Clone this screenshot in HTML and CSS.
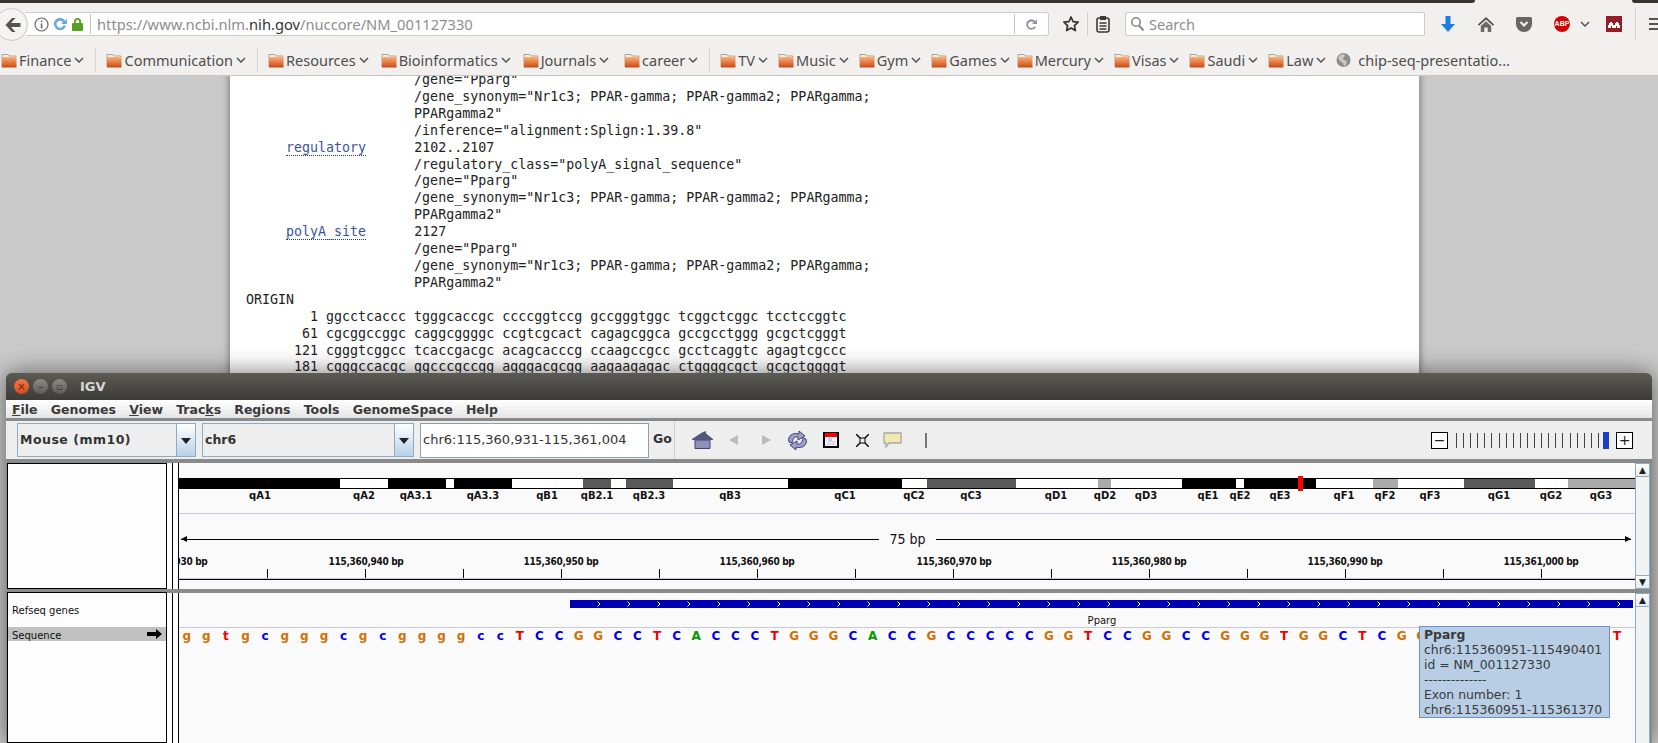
FILE: index.html
```html
<!DOCTYPE html>
<html lang="en">
<head>
    <meta charset="UTF-8">
    <title>IGV - NM_001127330</title>
    <link rel="stylesheet" href="styles.css">
</head>
<body>

<!-- Browser toolbar -->
<div class="browser">
    <div class="tab-strip"><div class="tab-dark tab-left"></div><div class="tab-dark tab-right"></div></div>
    <div class="nav-row">
        <div class="back-btn">
            <svg width="18" height="16" viewBox="0 0 18 16"><path d="M8 1 1.5 8 8 15h3.5L7 10h9.5V6H7l4.5-5z" fill="#555"/></svg>
        </div>
        <div class="url-bar">
            <svg class="url-icon" width="15" height="15" viewBox="0 0 15 15"><circle cx="7.5" cy="7.5" r="6.5" fill="none" stroke="#666" stroke-width="1.2"/><rect x="6.8" y="6.4" width="1.5" height="5" fill="#666"/><rect x="6.8" y="3.5" width="1.5" height="1.6" fill="#666"/></svg>
            <svg class="url-icon" width="16" height="16" viewBox="0 0 16 16"><path d="M13.5 5A6.2 6.2 0 1 0 14 10l-2.6-.8A3.5 3.5 0 1 1 11 6.3L9 8h6V2z" fill="#6ea6dc"/></svg>
            <svg class="url-icon" width="13" height="14" viewBox="0 0 13 14"><path d="M3 6V4.5a3.5 3.5 0 0 1 7 0V6h-1.8V4.5a1.7 1.7 0 0 0-3.4 0V6z" fill="#58a024"/><rect x="1" y="6" width="11" height="8" rx="1" fill="#58a024"/></svg>
            <span class="url-sep"></span>
            <span class="url-text">https://www.ncbi.nlm.<b>nih.gov</b>/nuccore/NM_001127330</span>
            <span class="url-sep url-sep-end"></span>
            <svg class="url-reload" width="14" height="15" viewBox="0 0 14 15"><path d="M11.4 4.2A5.2 5.2 0 1 0 12 10l-1.9-.5a3.3 3.3 0 1 1-.3-4L8 7h5V2z" fill="#8c959e"/></svg>
        </div>
        <svg class="star" width="18" height="18" viewBox="0 0 18 18"><path d="M9 2l2.1 4.6 5 .6-3.7 3.4 1 5L9 13.1 4.600 15.600l1-5L1.900 7.200l5-.6z" fill="none" stroke="#333" stroke-width="1.700" stroke-linejoin="round"/></svg>
        <span class="nav-sep"></span>
        <svg class="clipboard" width="14" height="18" viewBox="0 0 14 18"><rect x="1" y="3" width="12" height="14" rx="2" fill="none" stroke="#3a3a3a" stroke-width="1.600"/><rect x="4" y="1" width="6" height="4" fill="#3a3a3a"/><path d="M3.500 8h7M3.500 11h7M3.500 14h7" stroke="#3a3a3a" stroke-width="1.500"/></svg>
        <div class="search-box">
            <svg width="15" height="16" viewBox="0 0 15 16"><circle cx="6" cy="6" r="4.300" fill="none" stroke="#888" stroke-width="1.600"/><path d="M9 9.500l4.500 5" stroke="#888" stroke-width="2"/></svg>
            <span>Search</span>
        </div>
        <svg class="tool-download" width="16" height="18" viewBox="0 0 16 18"><path d="M5.500 1h5v8H15l-7 8-7-8h4.500z" fill="#1c7ee0"/></svg>
        <svg class="tool-home" width="18" height="17" viewBox="0 0 18 17"><path d="M9 1 0.800 8.500l1.200 1.200L9 3.500l7 6.200 1.200-1.200z" fill="#555"/><path d="M3.800 10 9 5.300l5.200 4.700V16h-3.500v-4.500H7.300V16H3.800z" fill="#6a6a6a"/></svg>
        <svg class="tool-pocket" width="16" height="15" viewBox="0 0 16 15"><path d="M1.500 0h13A1.500 1.500 0 0 1 16 1.500V7A8 8 0 0 1 0 7V1.500A1.500 1.500 0 0 1 1.500 0z" fill="#666"/><path d="M4.500 5 8 8.500 11.500 5" fill="none" stroke="#f2f0ee" stroke-width="2.200"/></svg>
        <div class="tool-abp">ABP</div>
        <svg class="tool-chevron" width="10" height="6" viewBox="0 0 10 6"><path d="M1 1l4 4 4-4" fill="none" stroke="#555" stroke-width="1.500"/></svg>
        <div class="tool-mask"><svg width="12" height="7" viewBox="0 0 12 7"><path d="M0 7V4h1V2h1V1h2v1h1v2h2V2h1V1h2v1h1v2h1v3H9V5H8v2H4V5H3v2z" fill="#fff"/></svg></div>
        <span class="tool-divider"></span>
        <div class="hamburger"><span></span><span></span><span></span></div>
    </div>

    <div class="bookmarks">
        <div class="bm"><svg class="folder"><use href="#folder-icon"/></svg><span>Finance</span><svg class="bm-chev" viewBox="0 0 10 6"><path d="M1 1l4 4 4-4"/></svg></div>
        <i class="bm-sep"></i>
        <div class="bm"><svg class="folder"><use href="#folder-icon"/></svg><span>Communication</span><svg class="bm-chev" viewBox="0 0 10 6"><path d="M1 1l4 4 4-4"/></svg></div>
        <i class="bm-sep"></i>
        <div class="bm bm-wide"><svg class="folder"><use href="#folder-icon"/></svg><span>Resources</span><svg class="bm-chev" viewBox="0 0 10 6"><path d="M1 1l4 4 4-4"/></svg></div>
        <div class="bm bm-wide"><svg class="folder"><use href="#folder-icon"/></svg><span>Bioinformatics</span><svg class="bm-chev" viewBox="0 0 10 6"><path d="M1 1l4 4 4-4"/></svg></div>
        <div class="bm bm-wider"><svg class="folder"><use href="#folder-icon"/></svg><span>Journals</span><svg class="bm-chev" viewBox="0 0 10 6"><path d="M1 1l4 4 4-4"/></svg></div>
        <div class="bm"><svg class="folder"><use href="#folder-icon"/></svg><span>career</span><svg class="bm-chev" viewBox="0 0 10 6"><path d="M1 1l4 4 4-4"/></svg></div>
        <i class="bm-sep"></i>
        <div class="bm"><svg class="folder"><use href="#folder-icon"/></svg><span>TV</span><svg class="bm-chev" viewBox="0 0 10 6"><path d="M1 1l4 4 4-4"/></svg></div>
        <div class="bm"><svg class="folder"><use href="#folder-icon"/></svg><span>Music</span><svg class="bm-chev" viewBox="0 0 10 6"><path d="M1 1l4 4 4-4"/></svg></div>
        <div class="bm"><svg class="folder"><use href="#folder-icon"/></svg><span>Gym</span><svg class="bm-chev" viewBox="0 0 10 6"><path d="M1 1l4 4 4-4"/></svg></div>
        <div class="bm bm-tight"><svg class="folder"><use href="#folder-icon"/></svg><span>Games</span><svg class="bm-chev" viewBox="0 0 10 6"><path d="M1 1l4 4 4-4"/></svg></div>
        <div class="bm"><svg class="folder"><use href="#folder-icon"/></svg><span>Mercury</span><svg class="bm-chev" viewBox="0 0 10 6"><path d="M1 1l4 4 4-4"/></svg></div>
        <div class="bm"><svg class="folder"><use href="#folder-icon"/></svg><span>Visas</span><svg class="bm-chev" viewBox="0 0 10 6"><path d="M1 1l4 4 4-4"/></svg></div>
        <div class="bm"><svg class="folder"><use href="#folder-icon"/></svg><span>Saudi</span><svg class="bm-chev" viewBox="0 0 10 6"><path d="M1 1l4 4 4-4"/></svg></div>
        <div class="bm"><svg class="folder"><use href="#folder-icon"/></svg><span>Law</span><svg class="bm-chev" viewBox="0 0 10 6"><path d="M1 1l4 4 4-4"/></svg></div>
        <div class="bm bm-link">
            <svg class="globe" width="15" height="16" viewBox="0 0 15 16"><circle cx="7.500" cy="8" r="7" fill="#8d8d8d"/><path d="M4 3l4-1 1 2-2 2 1 2 3 1-1 4-2 1-1-3-3-2-2-3z" fill="#c9c9c9"/></svg>
            <span>chip-seq-presentatio...</span>
        </div>
    </div>
</div>

<svg class="defs" width="0" height="0">
    <defs>
        <linearGradient id="folder-fill" x1="0" y1="0" x2="0" y2="1">
            <stop offset="0" stop-color="#f7b27a"/>
            <stop offset="1" stop-color="#cf4510"/>
        </linearGradient>
        <symbol id="folder-icon" viewBox="0 0 16 15">
            <path d="M1 14V1.500h6l1 1.500h7v1" fill="#f4f1ec" stroke="#a9a49c"/>
            <rect x="1" y="4" width="14.500" height="10.500" fill="url(#folder-fill)"/>
        </symbol>
    </defs>
</svg>

<!-- Page behind the IGV window -->
<div class="page">
    <div class="sheet">
<pre>                     /gene="Pparg"
                     /gene_synonym="Nr1c3; PPAR-gamma; PPAR-gamma2; PPARgamma;
                     PPARgamma2"
                     /inference="alignment:Splign:1.39.8"
     <a>regulatory</a>      2102..2107
                     /regulatory_class="polyA_signal_sequence"
                     /gene="Pparg"
                     /gene_synonym="Nr1c3; PPAR-gamma; PPAR-gamma2; PPARgamma;
                     PPARgamma2"
     <a>polyA_site</a>      2127
                     /gene="Pparg"
                     /gene_synonym="Nr1c3; PPAR-gamma; PPAR-gamma2; PPARgamma;
                     PPARgamma2"
ORIGIN
        1 ggcctcaccc tgggcaccgc ccccggtccg gccgggtggc tcggctcggc tcctccggtc
       61 cgcggccggc caggcggggc ccgtcgcact cagagcggca gccgcctggg gcgctcgggt
      121 cgggtcggcc tcaccgacgc acagcacccg ccaagccgcc gcctcaggtc agagtcgccc
      181 cgggccacgc ggcccgccgg agggacgcgg aagaagagac ctggggcgct gcgctggggt</pre>
    </div>
</div>

<!-- IGV window -->
<div class="igv">
    <div class="titlebar">
        <span class="win-btn win-close">×</span>
        <span class="win-btn">–</span>
        <span class="win-btn">▫</span>
        <span class="win-title">IGV</span>
    </div>

    <div class="menubar">
        <span><u>F</u>ile</span>
        <span>Genomes</span>
        <span><u>V</u>iew</span>
        <span>Trac<u>k</u>s</span>
        <span>Regions</span>
        <span>Tools</span>
        <span>GenomeSpace</span>
        <span>Help</span>
    </div>

    <div class="toolbar">
        <div class="combo combo-genome"><span>Mouse (mm10)</span><i class="combo-arrow"></i></div>
        <div class="combo combo-chr"><span>chr6</span><i class="combo-arrow"></i></div>
        <div class="locus">chr6:115,360,931-115,361,004</div>
        <div class="go-btn">Go</div>

        <svg class="ic ic-home" width="21" height="18" viewBox="0 0 21 18"><path d="M3 9h15v8.500H3z" fill="#8f8fb8" stroke="#44446a"/><path d="M0 8 10 1.500l4-1.500v2.500L21 8v1H0z" fill="#55557c"/></svg>
        <svg class="ic ic-left" width="9" height="10" viewBox="0 0 9 10"><path d="M9 0v10L0 5z" fill="#bbb"/></svg>
        <svg class="ic ic-right" width="9" height="10" viewBox="0 0 9 10"><path d="M0 0v10l9-5z" fill="#bbb"/></svg>
        <svg class="ic ic-refresh" width="21" height="21" viewBox="0 0 21 21"><path d="M2 12C0 6 6 2 12 4V1l6 5-7 4V7C8 6 6 8 5 13z" fill="#9d9fd3" stroke="#40406a"/><path d="M19 9c2 6-4 10-10 8v3l-6-5 7-4v3c3 1 5-1 6-6z" fill="#9d9fd3" stroke="#40406a"/></svg>
        <svg class="ic ic-bar" width="16" height="16" viewBox="0 0 16 16"><rect x="1" y="1" width="14" height="14" fill="#f4f1fa" stroke="#000" stroke-width="2"/><rect x="2" y="1" width="12" height="4" fill="#f00"/><rect x="5" y="6" width="4" height="4" fill="#c9cdee"/><rect x="9" y="9" width="3" height="4" fill="#f0cfe0"/><rect x="4" y="11" width="4" height="2" fill="#d5d8f2"/></svg>
        <svg class="ic ic-fit" width="13" height="13" viewBox="0 0 13 13"><path d="M0 0l4 4M13 0L9 4M0 13l4-4M13 13L9 9" stroke="#000" stroke-width="1.400"/><rect x="4" y="4" width="5" height="5" fill="none" stroke="#000"/></svg>
        <svg class="ic ic-note" width="19" height="16" viewBox="0 0 19 16"><path d="M1 1h17v10H6l-3 4v-4H1z" fill="#f0eab0" stroke="#a8a8a8" stroke-width="1.300"/></svg>
        <span class="ic-sep"></span>

        <div class="zoom-ctl">
            <span class="zoom-btn">−</span>
            <span class="zoom-ticks"></span>
            <span class="zoom-thumb"></span>
            <span class="zoom-btn">+</span>
        </div>
    </div>

    <!-- Header panel: ideogram and ruler -->
    <div class="panel panel-top">
        <div class="names"></div>
        <div class="gutter"></div>
        <div class="data">
            <div class="ideogram">
                <i class="b-k" style="width:161px"></i><i class="b-w" style="width:48px"></i><i class="b-k" style="width:58px"></i><i class="b-w" style="width:8px"></i><i class="b-k" style="width:58px"></i><i class="b-w" style="width:71px"></i><i class="b-d" style="width:28px"></i><i class="b-w" style="width:15px"></i><i class="b-d" style="width:47px"></i><i class="b-w" style="width:115px"></i><i class="b-k" style="width:114px"></i><i class="b-w" style="width:25px"></i><i class="b-d" style="width:89px"></i><i class="b-w" style="width:82px"></i><i class="b-l" style="width:13px"></i><i class="b-w" style="width:71px"></i><i class="b-k" style="width:54px"></i><i class="b-w" style="width:8px"></i><i class="b-k" style="width:72px"></i><i class="b-w" style="width:57px"></i><i class="b-l" style="width:25px"></i><i class="b-w" style="width:66px"></i><i class="b-d" style="width:71px"></i><i class="b-w" style="width:33px"></i><i class="b-l" style="width:67px"></i>
                <span class="locator" style="left:1119px"></span>
            </div>
            <div class="band-labels">
                <span style="left:81px">qA1</span><span style="left:185px">qA2</span><span style="left:237px">qA3.1</span><span style="left:304px">qA3.3</span><span style="left:368px">qB1</span><span style="left:418px">qB2.1</span><span style="left:470px">qB2.3</span><span style="left:551px">qB3</span><span style="left:666px">qC1</span><span style="left:735px">qC2</span><span style="left:792px">qC3</span><span style="left:877px">qD1</span><span style="left:926px">qD2</span><span style="left:967px">qD3</span><span style="left:1029px">qE1</span><span style="left:1061px">qE2</span><span style="left:1101px">qE3</span><span style="left:1165px">qF1</span><span style="left:1206px">qF2</span><span style="left:1251px">qF3</span><span style="left:1320px">qG1</span><span style="left:1372px">qG2</span><span style="left:1422px">qG3</span>
            </div>
            <div class="scale">
                <i class="scale-line scale-left"></i>
                <span>75 bp</span>
                <i class="scale-line scale-right"></i>
            </div>
            <div class="tick-labels">
                <span style="left:-9px">115,360,930 bp</span><span style="left:187px">115,360,940 bp</span><span style="left:382px">115,360,950 bp</span><span style="left:578px">115,360,960 bp</span><span style="left:775px">115,360,970 bp</span><span style="left:970px">115,360,980 bp</span><span style="left:1166px">115,360,990 bp</span><span style="left:1362px">115,361,000 bp</span>
            </div>
            <div class="ticks"></div>
        </div>
        <div class="scroller"><span class="sc-btn">▲</span><span class="sc-track"></span><span class="sc-btn">▼</span></div>
    </div>

    <!-- Tracks -->
    <div class="panel panel-bottom">
        <div class="names">
            <div class="track-name">Refseq genes</div>
            <div class="seq-name">
                <span>Sequence</span>
                <svg width="15" height="10" viewBox="0 0 15 10"><path d="M0 3h9V0l6 5-6 5V7H0z" fill="#000"/></svg>
            </div>
        </div>
        <div class="gutter"></div>
        <div class="data">
            <div class="gene-row">
                <svg class="gene-bar" width="1063" height="8">
                    <defs><pattern id="chevrons" x="1" width="30" height="8" patternUnits="userSpaceOnUse"><path d="M26.500 1.500l2.500 2.500-2.500 2.500" fill="none" stroke="#fff"/></pattern></defs>
                    <rect width="1063" height="8" fill="#0000b2"/>
                    <rect width="1063" height="8" fill="url(#chevrons)"/>
                </svg>
                <span class="gene-label">Pparg</span>
            </div>
            <div class="sequence"><i class="g">g</i><i class="g">g</i><i class="t">t</i><i class="g">g</i><i class="c">c</i><i class="g">g</i><i class="g">g</i><i class="g">g</i><i class="c">c</i><i class="g">g</i><i class="c">c</i><i class="g">g</i><i class="g">g</i><i class="g">g</i><i class="g">g</i><i class="c">c</i><i class="c">c</i><i class="t">T</i><i class="c">C</i><i class="c">C</i><i class="g">G</i><i class="g">G</i><i class="c">C</i><i class="c">C</i><i class="t">T</i><i class="c">C</i><i class="a">A</i><i class="c">C</i><i class="c">C</i><i class="c">C</i><i class="t">T</i><i class="g">G</i><i class="g">G</i><i class="g">G</i><i class="c">C</i><i class="a">A</i><i class="c">C</i><i class="c">C</i><i class="g">G</i><i class="c">C</i><i class="c">C</i><i class="c">C</i><i class="c">C</i><i class="c">C</i><i class="g">G</i><i class="g">G</i><i class="t">T</i><i class="c">C</i><i class="c">C</i><i class="g">G</i><i class="g">G</i><i class="c">C</i><i class="c">C</i><i class="g">G</i><i class="g">G</i><i class="g">G</i><i class="t">T</i><i class="g">G</i><i class="g">G</i><i class="c">C</i><i class="t">T</i><i class="c">C</i><i class="g">G</i><i class="g">G</i><i class="c">C</i><i class="t">T</i><i class="c">C</i><i class="g">G</i><i class="g">G</i><i class="c">C</i><i class="t">T</i><i class="c">C</i><i class="c">C</i><i class="t">T</i></div>
            <div class="tooltip">
                <b>Pparg</b>
                <div>chr6:115360951-115490401</div>
                <div>id = NM_001127330</div>
                <div>--------------</div>
                <div>Exon number: 1</div>
                <div>chr6:115360951-115361370</div>
            </div>
        </div>
        <div class="scroller"><span class="sc-btn">▲</span><span class="sc-track"></span></div>
    </div>
</div>

</body>
</html>
```

FILE: styles.css
```css
/* Base */
html, body {
    margin: 0;
    padding: 0;
    height: 743px;
    overflow: hidden;
}

body {
    position: relative;
    display: flex;
    flex-direction: column;
    background-color: #cacaca;
    font-family: "Noto Sans", sans-serif;
}

.defs {
    position: absolute;
}

/* Browser toolbar */
.browser {
    height: 76px;
    flex: none;
    background-color: #f2f0ee;
    border-bottom: 1px solid #c9c5c1;
    box-sizing: border-box;
    overflow: hidden;
}

.tab-strip {
    display: flex;
    height: 3px;
    justify-content: space-between;
}

.tab-dark {
    background-color: #35342f;
    height: 3px;
}

.tab-left {
    width: 1475px;
    border-bottom-right-radius: 4px;
}

.tab-right {
    width: 26px;
    border-bottom-left-radius: 4px;
}

.nav-row {
    position: relative;
    display: flex;
    align-items: center;
    height: 42px;
    padding-left: 26px;
    box-sizing: border-box;
}

.nav-row > * {
    flex: none;
}

.back-btn {
    position: absolute;
    left: -5px;
    top: 5px;
    height: 31px;
    border: 1px solid #c6c6c6;
    border-radius: 50%;
    background-color: #f5f4f2;
    display: flex;
    justify-content: flex-end;
    align-items: center;
    padding-right: 5px;
    box-sizing: content-box;
    width: 26px;
    z-index: 1;
}

.url-bar {
    display: flex;
    align-items: center;
    width: 1023px;
    height: 24px;
    background-color: #fff;
    border: 1px solid #cbcbcb;
    border-left: none;
    border-radius: 0 3px 3px 0;
    box-sizing: border-box;
    padding-left: 8px;
}

.url-icon {
    margin-right: 3px;
    flex: none;
}

.url-sep {
    width: 1px;
    height: 20px;
    background-color: #c8c8c8;
    margin: 0 6px 0 3px;
}

.url-text {
    font-size: 14.7px;
    color: #8d8d8d;
    white-space: nowrap;
}

.url-text b {
    font-weight: normal;
    color: #333;
}

.url-sep-end {
    margin: 0 0 0 auto;
}

.url-reload {
    margin: 0 10px 0 9px;
}

.star {
    margin-left: 13px;
}

.nav-sep {
    width: 1px;
    height: 24px;
    background-color: #cfcfcf;
    margin-left: 7px;
}

.clipboard {
    margin-left: 8px;
}

.search-box {
    display: flex;
    align-items: center;
    gap: 4px;
    width: 300px;
    height: 24px;
    margin-left: 15px;
    padding-left: 4px;
    background-color: #fff;
    border: 1px solid #cbcbcb;
    border-radius: 2px;
    box-sizing: border-box;
    font-size: 14.5px;
    color: #8d8d8d;
}

.tool-download { margin-left: 15px; }
.tool-home { margin-left: 21px; }
.tool-pocket { margin-left: 21px; }

.tool-abp {
    margin-left: 22px;
    width: 16px;
    height: 16px;
    border-radius: 50%;
    background-color: #d20000;
    color: #fff;
    font: bold 7px "Liberation Sans", sans-serif;
    line-height: 16px;
    text-align: center;
}

.tool-chevron { margin-left: 10px; }

.tool-mask {
    display: flex;
    justify-content: center;
    align-items: center;
    width: 16px;
    height: 16px;
    margin-left: 16px;
    background-color: #971d24;
}

.tool-divider {
    width: 1px;
    height: 34px;
    background-color: #d6d4d2;
    margin-left: 13px;
}

.hamburger {
    display: flex;
    flex-direction: column;
    gap: 3px;
    margin-left: 13px;
}

.hamburger span {
    display: block;
    width: 16px;
    height: 2px;
    background-color: #555;
}

/* Bookmarks */
.bookmarks {
    display: flex;
    align-items: center;
    height: 30px;
    padding-left: 1px;
    font-size: 14.5px;
    color: #4d4d4d;
    white-space: nowrap;
}

.bm {
    display: flex;
    align-items: center;
    margin-right: 10px;
}

.bm-wide { margin-right: 12px; }
.bm-wider { margin-right: 15px; }
.bm-tight { margin-right: 7px; }

.folder {
    width: 16px;
    height: 15px;
    margin-right: 2px;
    flex: none;
}

.bm-chev {
    width: 10px;
    height: 6px;
    margin-left: 3px;
    fill: none;
    stroke: #555;
    stroke-width: 1.5;
}

.bm-sep {
    width: 1px;
    height: 24px;
    background-color: #d8d6d4;
    margin: 0 10px 0 1px;
}

.globe {
    margin-right: 7px;
}

/* Page behind */
.page {
    flex: 1;
    overflow: hidden;
    padding-left: 230px;
}

.sheet {
    width: 1189px;
    height: 100%;
    background-color: #fff;
    box-shadow: 0 0 8px rgba(0, 0, 0, 0.5);
    padding-left: 16px;
    box-sizing: border-box;
}

.sheet pre {
    margin: -4px 0 0;
    font-family: "DejaVu Sans Mono", monospace;
    font-size: 13.3px;
    line-height: 16.9px;
    color: #222;
}

.sheet a {
    color: #3a52a0;
    border-bottom: 1px dotted #1c2fd0;
}

/* IGV window */
.igv {
    position: absolute;
    left: 6px;
    right: 6px;
    top: 373px;
    bottom: 0;
    display: flex;
    flex-direction: column;
    background-color: #8a8a8a;
    border-radius: 6px 6px 0 0;
    box-shadow: 0 0 24px rgba(0, 0, 0, 0.55);
    font-family: "DejaVu Sans", sans-serif;
}

.titlebar {
    display: flex;
    align-items: center;
    height: 27px;
    padding-left: 8px;
    gap: 4px;
    background: linear-gradient(#5c5a55, #3c3b37);
    border-radius: 6px 6px 0 0;
    flex: none;
}

.win-btn {
    width: 15px;
    height: 15px;
    border-radius: 50%;
    background: linear-gradient(#8b8a85, #5d5c57);
    color: #3c3b37;
    font-size: 10px;
    line-height: 15px;
    text-align: center;
}

.win-close {
    background: linear-gradient(#f1774a, #d8491c);
    color: #6e2008;
}

.win-title {
    margin-left: 9px;
    font-size: 13px;
    font-weight: bold;
    color: #d9d8d2;
}

.menubar {
    display: flex;
    align-items: center;
    height: 18px;
    flex: none;
    padding-left: 6px;
    background: linear-gradient(#fff, #e4e4e4);
    font-size: 12.5px;
    font-weight: bold;
    color: #3a3a3a;
    gap: 13.2px;
}

.menubar u {
    text-decoration: underline;
}

.toolbar {
    display: flex;
    align-items: center;
    height: 38px;
    margin-top: 3px;
    flex: none;
    padding-left: 11px;
    background-color: #eeeeee;
    box-sizing: border-box;
    font-size: 12.5px;
    color: #333;
}

.combo {
    display: flex;
    align-items: center;
    justify-content: space-between;
    height: 34px;
    box-sizing: border-box;
    border: 1px solid #8cabc9;
    background-color: #eeeeee;
    font-weight: bold;
    padding-left: 2px;
}

.combo span {
    padding-bottom: 2px;
}

.combo-genome {
    width: 179px;
    margin-right: 6px;
    letter-spacing: 0.5px;
}

.combo-chr {
    width: 212px;
    margin-right: 6px;
}

.combo-arrow {
    position: relative;
    width: 18px;
    height: 32px;
    border-left: 1px solid #8cabc9;
    background: linear-gradient(#fff, #b9d0e6);
}

.combo-arrow::after {
    content: "";
    position: absolute;
    left: 4px;
    top: 14px;
    border-left: 5px solid transparent;
    border-right: 5px solid transparent;
    border-top: 6px solid #222;
}

.locus {
    width: 229px;
    height: 35px;
    box-sizing: border-box;
    padding-left: 2px;
    background-color: #fff;
    border: 1px solid #8f9fae;
    font-size: 13px;
    font-weight: normal;
    line-height: 32px;
    white-space: nowrap;
}

.go-btn {
    width: 26px;
    height: 38px;
    box-sizing: border-box;
    padding-left: 4px;
    border-right: 1px solid #d0d0d0;
    font-weight: bold;
    line-height: 36px;
    margin-right: 17px;
}

.ic { flex: none; }
.ic-left { margin-left: 16px; }
.ic-right { margin-left: 24px; }
.ic-refresh { margin-left: 16px; }
.ic-bar { margin-left: 15px; }
.ic-fit { margin-left: 17px; }
.ic-note { margin-left: 14px; }

.ic-sep {
    width: 2px;
    height: 15px;
    background-color: #777;
    margin-left: 23px;
}

.zoom-ctl {
    display: flex;
    align-items: center;
    margin-left: auto;
    margin-right: 19px;
}

.zoom-btn {
    width: 17px;
    height: 17px;
    box-sizing: border-box;
    border: 1px solid #000;
    background-color: #fff;
    font-size: 14px;
    line-height: 14px;
    text-align: center;
    color: #222;
}

.zoom-ticks {
    width: 146px;
    height: 15px;
    margin-left: 8px;
    background: repeating-linear-gradient(90deg, #444 0 1px, transparent 1px 7.100px);
}

.zoom-thumb {
    width: 6px;
    height: 17px;
    margin: 0 7px 0 1px;
    background-color: #1c3fc8;
}

/* Panels */
.panel {
    display: flex;
    margin: 4px 0 0 1px;
    flex: none;
}

.panel-top {
    height: 126px;
}

.panel-bottom {
    flex: 1;
}

.names {
    width: 160px;
    box-sizing: border-box;
    background-color: #fdfdfd;
    border: 1px solid #000;
    font-size: 10px;
    color: #111;
}

.panel-bottom .names {
    margin-top: -1px;
}

.gutter {
    width: 12px;
    box-sizing: border-box;
    background: linear-gradient(#000, #000) 5px 0 / 1px 100% no-repeat #fff;
    border-right: 1px solid #000;
}

.data {
    position: relative;
    width: 1456px;
    background-color: #fafafa;
    overflow: hidden;
}

.ideogram {
    position: relative;
    display: flex;
    height: 11px;
    margin-top: 15px;
    box-sizing: border-box;
    border-top: 1px solid #000;
    border-bottom: 1px solid #000;
}

.ideogram i {
    display: block;
    height: 100%;
    flex: none;
}

.b-k { background-color: #000; }
.b-w { background-color: #fff; }
.b-d { background-color: #595959; }
.b-l { background-color: #aaa; }

.locator {
    position: absolute;
    top: -3px;
    width: 5px;
    height: 15px;
    background-color: #f00;
}

.band-labels {
    position: relative;
    height: 24px;
    border-bottom: 1px solid #c9c9d9;
    font-size: 10px;
    font-weight: bold;
    color: #111;
}

.band-labels span {
    position: absolute;
    top: 0;
    transform: translateX(-50%);
    line-height: 13px;
}

.scale {
    display: flex;
    align-items: center;
    height: 16px;
    margin: 17px 4px 0 2px;
    font-family: "DejaVu Sans Condensed", "DejaVu Sans", sans-serif;
    font-size: 14px;
    color: #111;
}

.scale span {
    width: 57px;
    text-align: center;
}

.scale-line {
    position: relative;
    display: block;
    height: 1px;
    background-color: #000;
}

.scale-left {
    width: 698px;
}

.scale-right {
    flex: 1;
}

.scale-left::before, .scale-right::after {
    content: "";
    position: absolute;
    top: -3px;
    border-top: 3.500px solid transparent;
    border-bottom: 3.500px solid transparent;
}

.scale-left::before {
    left: 0;
    border-right: 6px solid #000;
}

.scale-right::after {
    right: 0;
    border-left: 6px solid #000;
}

.tick-labels {
    position: relative;
    height: 22px;
    font-family: "DejaVu Sans Condensed", "DejaVu Sans", sans-serif;
    font-size: 10px;
    font-weight: bold;
    letter-spacing: -0.3px;
    color: #111;
}

.tick-labels span {
    position: absolute;
    top: 8px;
    transform: translateX(-50%);
    white-space: nowrap;
    line-height: 14px;
}

.ticks {
    height: 9px;
    border-bottom: 1px solid #c9c9d9;
    background: repeating-linear-gradient(90deg, transparent 0 88px, #000 88px 89px, transparent 89px 98px);
}

.panel-top .data::after {
    content: "";
    display: block;
    height: 1px;
    background-color: #000;
}

/* Track names */
.track-name {
    padding: 11px 0 0 4px;
    height: 23px;
    line-height: 13px;
}

.seq-name {
    display: flex;
    align-items: center;
    justify-content: space-between;
    height: 14px;
    padding: 0 4px;
    background-color: #c0c0c0;
}

.seq-name span {
    padding-top: 2px;
}

/* Tracks */
.gene-row {
    position: relative;
    height: 34px;
    border-bottom: 1px solid #c9c9d9;
}

.gene-bar {
    position: absolute;
    left: 391px;
    top: 7px;
}

.gene-label {
    position: absolute;
    left: 923px;
    top: 21px;
    transform: translateX(-50%);
    font-size: 10px;
    line-height: 13px;
    color: #111;
}

.sequence {
    display: flex;
    margin-left: -2px;
    font-size: 12px;
    font-weight: bold;
    line-height: 16px;
}

.sequence i {
    width: 19.6px;
    flex: none;
    text-align: center;
    font-style: normal;
}

.sequence .a { color: #009a00; }
.sequence .c { color: #0000f0; }
.sequence .g { color: #d17105; }
.sequence .t { color: #f00000; }

.tooltip {
    position: absolute;
    left: 1240px;
    top: 33px;
    width: 191px;
    height: 92px;
    box-sizing: border-box;
    padding: 0 0 0 4px;
    background-color: #b8cee4;
    border: 1px solid #6e8fc8;
    font-size: 12.4px;
    line-height: 15px;
    color: #3a3a3a;
    white-space: nowrap;
}

/* Scrollbars */
.scroller {
    display: flex;
    flex-direction: column;
    width: 15px;
    box-sizing: border-box;
    background-color: #f2f2f2;
    border-left: 1px solid #8cabc9;
    border-right: 1px solid #8cabc9;
}

.sc-btn {
    height: 14px;
    background: linear-gradient(#fff, #e4ebf2);
    border-bottom: 1px solid #8cabc9;
    border-top: 1px solid #8cabc9;
    box-sizing: border-box;
    font-size: 9px;
    line-height: 12px;
    text-align: center;
    color: #222;
}

.sc-track {
    flex: 1;
}
```
